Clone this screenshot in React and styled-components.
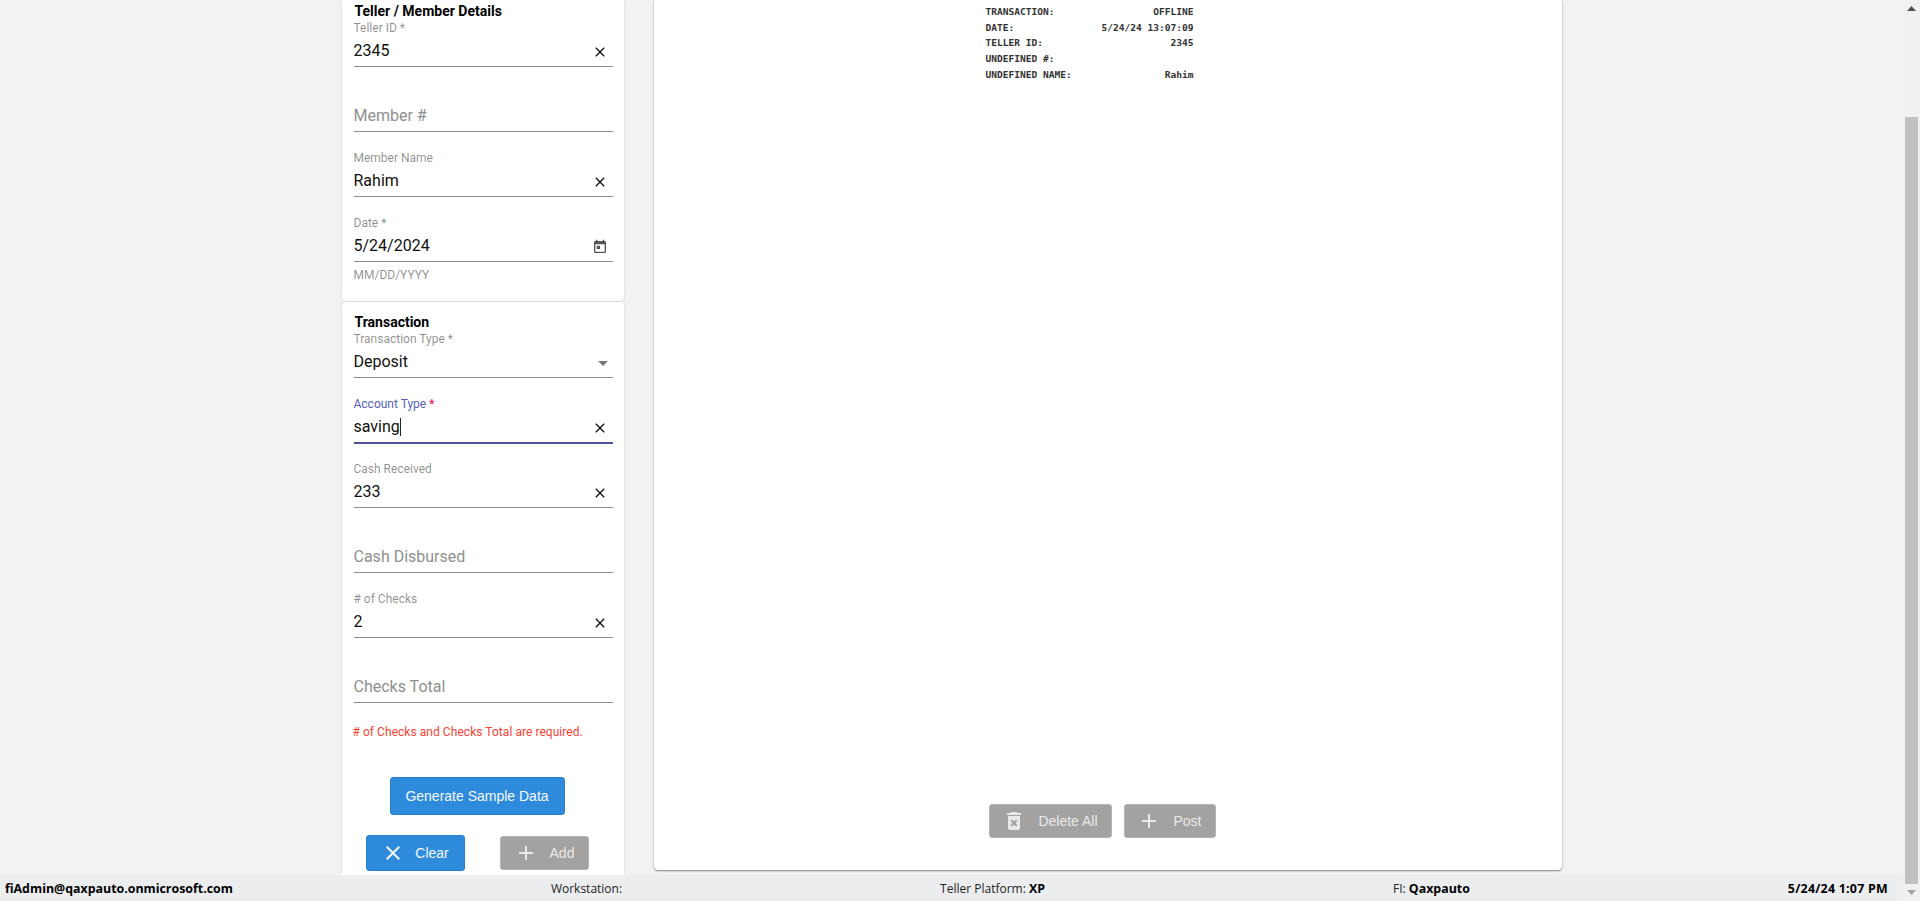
import React from 'react'
import styled, { createGlobalStyle } from 'styled-components'

const GlobalStyle = createGlobalStyle`
  html, body { margin: 0; padding: 0; height: 100%; overflow: hidden; }
  body { background: #f2f2f2; font-family: Roboto, "Liberation Sans", sans-serif; }
`

const Page = styled.div`
  display: flex;
  width: 1920px;
  height: 901px;
  overflow: hidden;
`
const Column = styled.div`
  flex: 1;
  display: flex;
  flex-direction: column;
  min-width: 0;
`
const Main = styled.main`
  flex: 1;
  min-height: 0;
  display: flex;
  justify-content: center;
  align-items: flex-start;
  gap: 30px;
  overflow: hidden;
`
const Sidebar = styled.aside`
  width: 282px;
  height: 100%;
  display: flex;
  flex-direction: column;
  gap: 1px;
`
const Card = styled.section`
  background: #fff;
  box-shadow: 0 0 3px rgba(0, 0, 0, 0.12);
  padding: ${p => (p.$first ? '4px' : '13px')} 11px 0 12px;
  border-radius: ${p => (p.$first ? '0 0 4px 4px' : '4px 4px 0 0')};
  height: ${p => (p.$first ? '301px' : 'auto')};
  flex: ${p => (p.$first ? 'none' : '1')};
  box-sizing: border-box;
`
const CardTitle = styled.h3`
  margin: 0 0 -1px;
  font-size: 14px;
  line-height: 15px;
  font-weight: 700;
  color: #000;
  padding-left: 1px;
`
const Field = styled.div`
  height: 49px;
  margin-top: ${p => (p.$tight ? '0' : '16px')};
  display: flex;
  flex-direction: column;
  justify-content: flex-end;
`
const Label = styled.label`
  font-size: 12px;
  line-height: 16px;
  position: relative;
  top: 1px;
  color: ${p => (p.$focused ? '#5560b5' : 'rgba(0, 0, 0, 0.45)')};
`
const Star = styled.span`
  color: ${p => (p.$focused ? '#f50057' : 'inherit')};
`
const InputRow = styled.div`
  height: ${p => (p.$focused ? '33px' : '32px')};
  margin-bottom: ${p => (p.$focused ? '-1px' : '0')};
  display: flex;
  align-items: center;
  justify-content: space-between;
  box-sizing: border-box;
  border-bottom: ${p => (p.$focused ? '2px solid #4f519f' : '1px solid #8c8c8c')};
`
const Value = styled.span`
  font-size: 16px;
  color: ${p => (p.$placeholder ? '#8f8f8f' : '#111')};
`
const Caret = styled.span`
  display: inline-block;
  width: 1px;
  height: 18px;
  background: #222;
  vertical-align: -4px;
`
const IconSlot = styled.span`
  display: flex;
  align-items: center;
  justify-content: center;
  flex: none;
  width: 16px;
  height: 16px;
  margin: 2px ${p => p.$right ?? 5}px 0 0;
  color: ${p => p.$color || '#111'};
  svg { flex: none; }
`
const Helper = styled.div`
  font-size: 12px;
  line-height: 14px;
  margin-top: 6px;
  color: rgba(0, 0, 0, 0.45);
`
const ErrorText = styled.p`
  margin: 22px 0 0 -1px;
  font-size: 12px;
  line-height: 14px;
  letter-spacing: 0.05px;
  color: #f44336;
`
const SampleRow = styled.div`
  display: flex;
  justify-content: center;
  margin-top: 38px;
  padding-right: 12px;
`
const ActionRow = styled.div`
  display: flex;
  justify-content: space-between;
  margin-top: 20px;
  padding: 0 24px 0 12px;
  align-items: center;
`
const Button = styled.button`
  display: inline-flex;
  align-items: center;
  justify-content: center;
  gap: ${p => p.$gap || 0}px;
  width: ${p => p.$w}px;
  height: ${p => p.$h}px;
  padding: 0;
  border: 1px solid ${p => (p.$disabled ? '#b5b4b3' : '#2a80cc')};
  border-radius: 3px;
  background: ${p => (p.$disabled ? '#a3a2a1' : '#2e8bdc')};
  color: ${p => (p.$disabled ? '#e9e9e9' : '#f4f8fc')};
  font-family: "Liberation Sans", Arial, sans-serif;
  font-size: 14px;
`
const Panel = styled.section`
  width: 908px;
  height: 870px;
  background: #fff;
  border-radius: 0 0 4px 4px;
  box-shadow: 0 1px 2px rgba(0, 0, 0, 0.45);
  display: flex;
  flex-direction: column;
`
const Receipt = styled.div`
  width: 208px;
  margin: 4px 0 0 332px;
  font-family: "DejaVu Sans Mono", monospace;
  font-size: 9.55px;
  font-weight: 700;
  color: #333;
`
const ReceiptRow = styled.div`
  display: flex;
  justify-content: space-between;
  height: 15.7px;
  line-height: 15.7px;
`
const PanelActions = styled.div`
  margin-top: auto;
  display: flex;
  justify-content: center;
  gap: 12px;
  padding: 0 11px 32px 0;
`
const Footer = styled.footer`
  height: 26px;
  flex: none;
  background: #ecedef;
  display: flex;
  align-items: center;
  justify-content: space-between;
  padding: 0 15px 0 5px;
  font-family: "Open Sans", sans-serif;
  font-size: 12px;
  color: #222;
`
const FooterItem = styled.span`
  margin-left: ${p => p.$left || 0}px;
`
const Strong = styled.b`
  font-size: 12.4px;
  font-weight: 700;
  color: #000;
  letter-spacing: ${p => p.$spread || 0}px;
`
const ScrollTrack = styled.div`
  width: 17px;
  flex: none;
  background: #f1f1f1;
  display: flex;
  flex-direction: column;
  align-items: center;
`
const ScrollArrow = styled.span`
  height: ${p => p.$h}px;
  display: flex;
  align-items: center;
  justify-content: center;
  color: ${p => p.$color};
`
const ScrollThumb = styled.div`
  width: 13px;
  height: 767px;
  margin-top: 100px;
  background: #c1c1c1;
`

const CloseIcon = ({ size = 16 }) => (
  <svg width={size} height={size} viewBox="0 0 24 24" fill="currentColor">
    <path d="M19 6.41L17.59 5 12 10.59 6.41 5 5 6.41 10.59 12 5 17.59 6.41 19 12 13.41 17.59 19 19 17.59 13.41 12z" />
  </svg>
)
const PlusIcon = () => (
  <svg width="24" height="24" viewBox="0 0 24 24" fill="currentColor">
    <path d="M19 13h-6v6h-2v-6H5v-2h6V5h2v6h6v2z" />
  </svg>
)
const TrashIcon = () => (
  <svg width="24" height="24" viewBox="0 0 24 24" fill="currentColor">
    <path d="M6 19c0 1.1.9 2 2 2h8c1.1 0 2-.9 2-2V7H6v12zm2.46-7.12l1.41-1.41L12 12.59l2.12-2.12 1.41 1.41L13.41 14l2.12 2.12-1.41 1.41L12 15.41l-2.13 2.12-1.41-1.41L10.59 14l-2.13-2.12zM15.5 4l-1-1h-5l-1 1H5v2h14V4z" />
  </svg>
)
const CalendarIcon = () => (
  <svg width="16" height="16" viewBox="0 0 24 24" fill="currentColor">
    <path d="M19 3h-1V1h-2v2H8V1H6v2H5c-1.11 0-1.99.9-1.99 2L3 19c0 1.1.89 2 2 2h14c1.1 0 2-.9 2-2V5c0-1.1-.9-2-2-2zm0 16H5V8h14v11zM7 10h5v5H7z" />
  </svg>
)
const CaretIcon = () => (
  <svg width="24" height="24" viewBox="0 0 24 24" fill="currentColor">
    <path d="M7 10l5 5 5-5z" />
  </svg>
)
const Triangle = ({ up }) => (
  <svg width="9" height="5" viewBox="0 0 9 5" fill="currentColor">
    <path d={up ? 'M4.5 0L9 5H0z' : 'M0 0h9L4.5 5z'} />
  </svg>
)

const TextField = ({ label, value, placeholder, required, focused, tight, caret, icon }) => (
  <Field $tight={tight}>
    {label && (
      <Label $focused={focused}>
        {label}
        {required && <Star $focused={focused}> *</Star>}
      </Label>
    )}
    <InputRow $focused={focused}>
      <Value $placeholder={!!placeholder}>
        {value || placeholder}
        {caret && <Caret />}
      </Value>
      {icon}
    </InputRow>
  </Field>
)

const clear = <IconSlot><CloseIcon /></IconSlot>

const receipt = [
  ['TRANSACTION:', 'OFFLINE'],
  ['DATE:', '5/24/24 13:07:09'],
  ['TELLER ID:', '2345'],
  ['UNDEFINED #:', ''],
  ['UNDEFINED NAME:', 'Rahim'],
]

export default function App() {
  return (
    <Page>
      <GlobalStyle />
      <Column>
        <Main>
          <Sidebar>
            <Card $first>
              <CardTitle>Teller / Member Details</CardTitle>
              <TextField tight label="Teller ID" required value="2345" icon={clear} />
              <TextField placeholder="Member #" />
              <TextField label="Member Name" value="Rahim" icon={clear} />
              <TextField label="Date" required value="5/24/2024" icon={<IconSlot $color="#555"><CalendarIcon /></IconSlot>} />
              <Helper>MM/DD/YYYY</Helper>
            </Card>
            <Card>
              <CardTitle>Transaction</CardTitle>
              <TextField tight label="Transaction Type" required value="Deposit" icon={<IconSlot $color="#777" $right={2}><CaretIcon /></IconSlot>} />
              <TextField focused caret label="Account Type" required value="saving" icon={clear} />
              <TextField label="Cash Received" value="233" icon={clear} />
              <TextField placeholder="Cash Disbursed" />
              <TextField label="# of Checks" value="2" icon={clear} />
              <TextField placeholder="Checks Total" />
              <ErrorText># of Checks and Checks Total are required.</ErrorText>
              <SampleRow>
                <Button $w={175} $h={38}>Generate Sample Data</Button>
              </SampleRow>
              <ActionRow>
                <Button $w={99} $h={36} $gap={10}><CloseIcon size={24} />Clear</Button>
                <Button $w={89} $h={34} $gap={12} $disabled><PlusIcon />Add</Button>
              </ActionRow>
            </Card>
          </Sidebar>
          <Panel>
            <Receipt>
              {receipt.map(([name, val]) => (
                <ReceiptRow key={name}>
                  <span>{name}</span>
                  <span>{val}</span>
                </ReceiptRow>
              ))}
            </Receipt>
            <PanelActions>
              <Button $w={123} $h={34} $gap={12} $disabled><TrashIcon />Delete All</Button>
              <Button $w={92} $h={34} $gap={12} $disabled><PlusIcon />Post</Button>
            </PanelActions>
          </Panel>
        </Main>
        <Footer>
          <Strong>fiAdmin@qaxpauto.onmicrosoft.com</Strong>
          <FooterItem>Workstation:</FooterItem>
          <FooterItem>Teller Platform: <Strong>XP</Strong></FooterItem>
          <FooterItem $left={30}>FI: <Strong>Qaxpauto</Strong></FooterItem>
          <Strong $spread={0.25}>5/24/24 1:07 PM</Strong>
        </Footer>
      </Column>
      <ScrollTrack>
        <ScrollArrow $h={17} $color="#505050"><Triangle up /></ScrollArrow>
        <ScrollThumb />
        <ScrollArrow $h={17} $color="#a3a3a3"><Triangle /></ScrollArrow>
      </ScrollTrack>
    </Page>
  )
}
